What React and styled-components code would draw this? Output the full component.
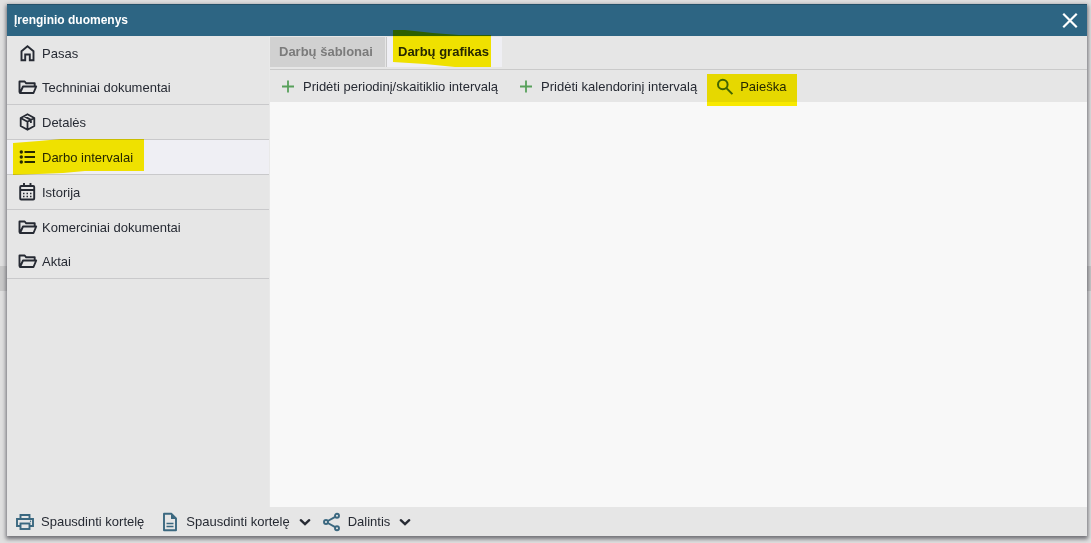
import React from "react";
import styled, { createGlobalStyle, css } from "styled-components";

const GlobalStyle = createGlobalStyle`
  *, *::before, *::after { box-sizing: border-box; }
  body { margin: 0; background: #e0e0e0; }
  body, button { font-family: "Liberation Sans", Arial, sans-serif; font-size: 13px; line-height: 16px; color: #262a33; }
`;

const Page = styled.main`
  position: relative;
  display: flex;
  min-height: 100vh;
  padding: 4px 4px 7px 7px;
`;

const BackdropRow = styled.div`
  position: absolute;
  left: 0;
  right: 0;
  top: 266px;
  height: 25px;
  background: #c9c9c9;
`;

const Dialog = styled.section`
  position: relative;
  flex: 1;
  display: flex;
  flex-direction: column;
  min-width: 0;
  background: #e6e6e6;
  box-shadow: 0 2px 4px 1px rgba(50, 50, 60, 0.65);
`;

const Header = styled.header`
  display: flex;
  align-items: center;
  justify-content: space-between;
  height: 32px;
  padding: 0 8px 0 7px;
  background: #2d6583;
  border-top: 1px solid #24516a;
  color: #fff;
`;

const Title = styled.h1`
  margin: 0;
  padding-bottom: 2px;
  font-size: 12px;
  line-height: 16px;
  font-weight: bold;
`;

const plainButton = css`
  position: relative;
  display: flex;
  align-items: center;
  border: 0;
  margin: 0;
  background: none;
  white-space: nowrap;
  cursor: pointer;
`;

const CloseButton = styled.button`
  ${plainButton}
  padding: 0;
  color: #fff;
`;

const Body = styled.div`
  flex: 1;
  display: flex;
  min-height: 0;
`;

const Sidebar = styled.nav`
  flex: none;
  width: 263px;
  border-right: 1px solid #e9e9e9;
`;

const NavItem = styled.button`
  ${plainButton}
  width: 100%;
  height: ${(p) => (p.$divided ? 35 : 34)}px;
  padding: 0 0 0 11px;
  gap: 4px;
  border-bottom: ${(p) => (p.$divided ? "1px solid #c9c9cb" : "0")};
  background: ${(p) => (p.$active ? "#efeff4" : "transparent")};
`;

const Label = styled.span`
  padding-top: 2px;
`;

const Content = styled.div`
  flex: 1;
  display: flex;
  flex-direction: column;
  min-width: 0;
`;

const Tabs = styled.div`
  display: flex;
  gap: 2px;
  height: 34px;
  padding: 1px 0 2px;
  border-bottom: 1px solid #cacaca;
`;

const Tab = styled.button`
  ${plainButton}
  min-width: 115px;
  padding: 0 10px 0 ${(p) => (p.$active ? 11 : 9)}px;
  font-weight: bold;
  color: ${(p) => (p.$active ? "#262a33" : "#7b7b7b")};
  background: ${(p) => (p.$active ? "#efeff4" : "#d1d1d1")};
  box-shadow: ${(p) => (p.$active ? "-1px 0 #c8c8c8" : "none")};
`;

const Toolbar = styled.div`
  display: flex;
  height: 32px;
  padding-left: 8px;
  gap: 18px;
`;

const ToolButton = styled.button`
  ${plainButton}
  padding: 0;
  gap: 5px;
`;

const Workspace = styled.div`
  flex: 1;
  background: #f8f8f8;
`;

const Footer = styled.footer`
  display: flex;
  align-items: center;
  height: 29px;
  padding-left: 8px;
`;

const FooterButton = styled.button`
  ${plainButton}
  padding: 0 ${(p) => (p.$menu ? 11 : 16)}px 0 0;
  gap: 6px;
`;

const Icon = styled.svg.attrs({ viewBox: "0 0 20 20", "aria-hidden": true })`
  flex: none;
  width: ${(p) => p.$size || 20}px;
  height: ${(p) => p.$size || 20}px;
  margin-left: ${(p) => p.$indent || 0}px;
  fill: none;
  stroke: ${(p) => p.$color || "#262a33"};
  stroke-width: ${(p) => p.$weight || 1.9};
`;

const Marker = styled.svg.attrs({ "aria-hidden": true })`
  position: absolute;
  z-index: 1;
  left: ${(p) => p.$left}px;
  top: ${(p) => p.$top}px;
  width: ${(p) => p.$width}px;
  height: ${(p) => p.$height}px;
  fill: #fff000;
  mix-blend-mode: multiply;
  pointer-events: none;
`;

const HomeIcon = () => (
  <Icon><path d="M3.5 8.2 9.500 3.300l6 4.900v9h-3.700v-5.700H7.200v5.700H3.500z" /></Icon>
);
const FolderIcon = () => (
  <Icon>
    <path d="M2.500 16 1.500 15V4.500h5.200l1.500 1.800h8.500v2.500M2 16l3-6.500h13.200L15.500 16z" strokeLinejoin="round" />
  </Icon>
);
const BoxIcon = () => (
  <Icon>
    <path d="M9.500 2.200 16.300 6v8L9.500 17.800 2.700 14V6zM2.700 6l6.800 3.800L16.300 6M9.500 9.800v8M6 4.100l6.900 3.800v3" strokeLinejoin="round" strokeWidth="1.800" />
  </Icon>
);
const ListIcon = () => (
  <Icon>
    <g fill="#262a33" stroke="none">
      <circle cx="3.300" cy="5" r="1.700" /><circle cx="3.300" cy="10" r="1.700" /><circle cx="3.300" cy="15" r="1.700" />
    </g>
    <path d="M6.500 5H17M6.500 10H17M6.500 15H17" />
  </Icon>
);
const CalendarIcon = () => (
  <Icon>
    <rect x="2.200" y="4" width="14" height="13.500" rx="1" />
    <path d="M2.200 8h14M6 1v3M12.500 1v3" />
    <path d="M5 11.500h9M5 14.500h9" strokeDasharray="1.500 2" strokeWidth="1.500" />
  </Icon>
);
const CloseIcon = () => (
  <Icon $size={18} $color="#fff" $weight={2.4}><path d="m2.500 2 15 15M17.500 2l-15 15" /></Icon>
);
const PlusIcon = () => (
  <Icon $color="#57a05a" $weight={1.8}><path d="M10 4.500v12M4 10.500h12" /></Icon>
);
const SearchIcon = () => (
  <Icon $color="#3f6a4b" $weight={2}><circle cx="7.800" cy="8.500" r="4.800" /><path d="m11.400 12.100 6 6" /></Icon>
);
const PrinterIcon = () => (
  <Icon $color="#3b6880">
    <path d="M5.500 6.500V3h9v3.500M5.500 14H2V7h16v7h-3.500" />
    <rect x="5.500" y="11.500" width="9" height="5.500" />
    <circle cx="15.500" cy="9.200" r=".7" fill="#3b6880" stroke="none" />
  </Icon>
);
const DocumentIcon = () => (
  <Icon $color="#3b6880">
    <path d="M4 1.800h7.500L16 6.300v11.900H4z" strokeLinejoin="round" />
    <path d="M11 2v5h5z" fill="#3b6880" stroke="none" />
    <path d="M6.500 11.500h7M6.500 14.500h7" strokeWidth="1.300" />
  </Icon>
);
const ShareIcon = () => (
  <Icon $color="#3b6880">
    <circle cx="4" cy="10" r="2" /><circle cx="15" cy="3.800" r="2" /><circle cx="15" cy="16.200" r="2" />
    <path d="M5.800 9 13.200 4.800M5.800 11l7.400 4.200" />
  </Icon>
);
const ChevronIcon = () => (
  <Icon $size={12} $indent={3} $weight={4}><path d="m3 7 7 6.500L17 7" strokeLinecap="round" /></Icon>
);

const navItems = [
  { label: "Pasas", icon: HomeIcon },
  { label: "Techniniai dokumentai", icon: FolderIcon, divided: true },
  { label: "Detalės", icon: BoxIcon, divided: true },
  { label: "Darbo intervalai", icon: ListIcon, divided: true, active: true },
  { label: "Istorija", icon: CalendarIcon, divided: true },
  { label: "Komerciniai dokumentai", icon: FolderIcon },
  { label: "Aktai", icon: FolderIcon, divided: true },
];

export default function App() {
  return (
    <>
      <GlobalStyle />
      <Page>
        <BackdropRow />
        <Dialog role="dialog" aria-labelledby="dialog-title">
          <Header>
            <Title id="dialog-title">Įrenginio duomenys</Title>
            <CloseButton aria-label="Uždaryti"><CloseIcon /></CloseButton>
          </Header>
          <Body>
            <Sidebar>
              {navItems.map(({ label, icon: Glyph, divided, active }) => (
                <NavItem key={label} $divided={divided} $active={active} aria-current={active ? "page" : undefined}>
                  <Glyph />
                  <Label>{label}</Label>
                  {active && (
                    <Marker $left={6} $top={-1} $width={131} $height={36}>
                      <path d="M0 4 26 2 48 0H131V32H72L50 34 0 36z" />
                    </Marker>
                  )}
                </NavItem>
              ))}
            </Sidebar>
            <Content>
              <Tabs role="tablist">
                <Tab role="tab" aria-selected="false">Darbų šablonai</Tab>
                <Tab role="tab" aria-selected="true" $active>
                  Darbų grafikas
                  <Marker $left={6} $top={-7} $width={98} $height={37}>
                    <path d="M0 0H12L40 3 66 5H98V37H62L32 34 0 32z" />
                  </Marker>
                </Tab>
              </Tabs>
              <Toolbar>
                <ToolButton><PlusIcon /><Label>Pridėti periodinį/skaitiklio intervalą</Label></ToolButton>
                <ToolButton><PlusIcon /><Label>Pridėti kalendorinį intervalą</Label></ToolButton>
                <ToolButton>
                  <SearchIcon /><Label>Paieška</Label>
                  <Marker $left={-8} $top={4} $width={90} $height={32}>
                    <path d="M0 0H90V32H0z" />
                  </Marker>
                </ToolButton>
              </Toolbar>
              <Workspace />
            </Content>
          </Body>
          <Footer>
            <FooterButton><PrinterIcon />Spausdinti kortelę</FooterButton>
            <FooterButton $menu><DocumentIcon />Spausdinti kortelę<ChevronIcon /></FooterButton>
            <FooterButton $menu><ShareIcon />Dalintis<ChevronIcon /></FooterButton>
          </Footer>
        </Dialog>
      </Page>
    </>
  );
}
